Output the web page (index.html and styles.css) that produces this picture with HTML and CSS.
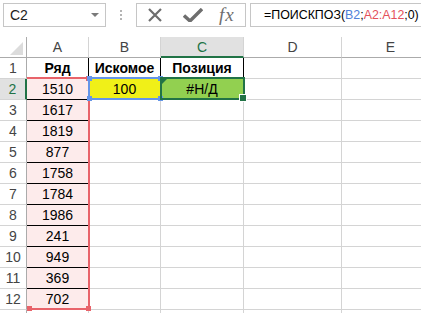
FILE: index.html
```html
<!DOCTYPE html>
<html lang="ru">
<head>
    <meta charset="UTF-8">
    <meta name="viewport" content="width=device-width, initial-scale=1.0">
    <title>ПОИСКПОЗ</title>
    <link rel="stylesheet" href="styles.css">
</head>
<body>
    <div class="bar">
        <div class="namebox">
            <span>C2</span>
            <svg class="drop" width="8" height="5" viewBox="0 0 8 5"><path d="M0 0h8L4 4z" fill="#7a7a7a"/></svg>
        </div>
        <div class="dots"><i></i><i></i><i></i></div>
        <div class="tools">
            <svg width="16" height="14" viewBox="0 0 16 14"><path d="M2 1l12 12M14 1L2 13" stroke="#6e6e6e" stroke-width="2.2" fill="none"/></svg>
            <svg width="20" height="14" viewBox="0 0 20 14"><path d="M1 7.5l6 5.5L19 1" stroke="#6e6e6e" stroke-width="3.4" fill="none" stroke-linejoin="round"/></svg>
            <span class="fx">fx</span>
        </div>
        <div class="formula">=ПОИСКПОЗ(<span class="ref-b">B2</span>;<span class="ref-a">A2:A12</span>;0)</div>
    </div>

    <div class="sheet">
        <div class="row head">
            <div class="corner"><span class="tri"></span></div>
            <div class="ch">A</div><div class="ch">B</div><div class="ch sel">C</div><div class="ch">D</div><div class="ch">E</div>
        </div>
        <div class="row">
            <div class="rh">1</div>
            <div class="c t b">Ряд</div><div class="c t b">Искомое</div><div class="c t b">Позиция</div><div class="c"></div><div class="c"></div>
        </div>
        <div class="row">
            <div class="rh sel">2</div>
            <div class="c a">1510</div><div class="c yellow">100</div><div class="c green">#Н/Д</div><div class="c"></div><div class="c"></div>
        </div>
        <div class="row"><div class="rh">3</div><div class="c a">1617</div><div class="c"></div><div class="c"></div><div class="c"></div><div class="c"></div></div>
        <div class="row"><div class="rh">4</div><div class="c a">1819</div><div class="c"></div><div class="c"></div><div class="c"></div><div class="c"></div></div>
        <div class="row"><div class="rh">5</div><div class="c a">877</div><div class="c"></div><div class="c"></div><div class="c"></div><div class="c"></div></div>
        <div class="row"><div class="rh">6</div><div class="c a">1758</div><div class="c"></div><div class="c"></div><div class="c"></div><div class="c"></div></div>
        <div class="row"><div class="rh">7</div><div class="c a">1784</div><div class="c"></div><div class="c"></div><div class="c"></div><div class="c"></div></div>
        <div class="row"><div class="rh">8</div><div class="c a">1986</div><div class="c"></div><div class="c"></div><div class="c"></div><div class="c"></div></div>
        <div class="row"><div class="rh">9</div><div class="c a">241</div><div class="c"></div><div class="c"></div><div class="c"></div><div class="c"></div></div>
        <div class="row"><div class="rh">10</div><div class="c a">949</div><div class="c"></div><div class="c"></div><div class="c"></div><div class="c"></div></div>
        <div class="row"><div class="rh">11</div><div class="c a">369</div><div class="c"></div><div class="c"></div><div class="c"></div><div class="c"></div></div>
        <div class="row"><div class="rh">12</div><div class="c a">702</div><div class="c"></div><div class="c"></div><div class="c"></div><div class="c"></div></div>
        <div class="row last"><div class="rh"></div><div class="c"></div><div class="c"></div><div class="c"></div><div class="c"></div><div class="c"></div></div>

        <!-- рамки ссылок формулы и выделение -->
        <div class="range red"><i class="k tr"></i><i class="k bl"></i><i class="k br"></i></div>
        <div class="range blue"><i class="k tl"></i><i class="k tr"></i><i class="k bl"></i><i class="k br"></i></div>
        <div class="range active"><i class="handle"></i><i class="mark"></i></div>
    </div>
</body>
</html>
```

FILE: styles.css
```css
body { margin: 0; overflow: hidden; height: 313px; background: #fff; font-family: "Liberation Sans", Arial, sans-serif; color: #000; }

.bar { height: 37px; display: flex; align-items: flex-start; padding: 3px 0 0 3px; box-sizing: border-box; }
.namebox { width: 103px; height: 24px; box-sizing: border-box; border: 1px solid #c6c6c6; display: flex; align-items: center; justify-content: space-between; padding: 0 6px 0 6px; font-size: 14px; color: #222; }
.drop { margin-top: 1px; }
.dots { width: 30px; height: 24px; display: flex; flex-direction: column; align-items: center; justify-content: center; gap: 2px; }
.dots i { width: 2px; height: 2px; background: #b4b4b4; }
.tools { width: 110px; height: 24px; box-sizing: border-box; border: 1px solid #c6c6c6; display: flex; align-items: center; padding-left: 10px; gap: 20px; }
.fx { font-family: "Liberation Serif", serif; font-style: italic; font-size: 19px; letter-spacing: 1px; color: #6e6e6e; margin-left: -4px; margin-top: -1px; }
.formula { flex: 1; height: 24px; margin-left: 4px; box-sizing: border-box; border: 1px solid #c6c6c6; border-right: none; font-size: 12.4px; line-height: 22px; padding-left: 13px; white-space: nowrap; overflow: hidden; }
.ref-b { color: #4f81d9; }
.ref-a { color: #e4505a; }

.sheet { position: relative; }
.row { display: grid; grid-template-columns: 27px 62px 72px 83px 98px 98px; height: 21px; }
.row.last { height: 4px; overflow: hidden; }
.row > div { box-sizing: border-box; border-right: 1px solid #d4d4d4; border-bottom: 1px solid #d4d4d4; text-align: center; font-size: 14px; line-height: 21px; white-space: nowrap; overflow: hidden; }

.head > div { color: #444; border-bottom-color: #ababab; line-height: 20px; }
.head .sel { background: #e1e1e1; color: #217346; border-bottom: 2px solid #217346; }
.corner { position: relative; border-right-color: #ababab !important; }
.tri { position: absolute; left: 10px; top: 5px; width: 13px; height: 13px; background: #dcdcdc; clip-path: polygon(100% 0, 100% 100%, 0 100%); }

.rh { color: #444; border-right-color: #ababab !important; }
.rh.sel { background: #e1e1e1; color: #217346; border-right: 2px solid #217346 !important; }

.c.t { border-right-color: #000; }
.b { font-weight: bold; }
.c.a { background: #fdebeb; border-bottom-color: #000; }
.yellow { background: #f0f018; }
.green { background: #92d050; }

.range { position: absolute; box-sizing: border-box; }
.red { left: 27px; top: 40px; width: 63px; height: 233px; border: 2px solid #e8636a; border-left: none; }
.blue { left: 88px; top: 40px; width: 74px; height: 23px; border: 2px solid #6495e8; }
.active { left: 160px; top: 40px; width: 85px; height: 23px; border: 2px solid #217346; }
.k { position: absolute; width: 5px; height: 5px; }
.red .k { background: #e8636a; }
.blue .k { background: #6495e8; }
.tl { left: -3px; top: -3px; }
.tr { right: -3px; top: -3px; }
.bl { left: -3px; bottom: -3px; }
.red .bl { left: 0; }
.br { right: -3px; bottom: -3px; }
.handle { position: absolute; right: -4px; bottom: -4px; width: 6px; height: 6px; background: #217346; border: 1px solid #fff; }
.mark { position: absolute; left: 0; top: 0; width: 5px; height: 5px; background: #217346; clip-path: polygon(0 0, 100% 0, 0 100%); }
```
